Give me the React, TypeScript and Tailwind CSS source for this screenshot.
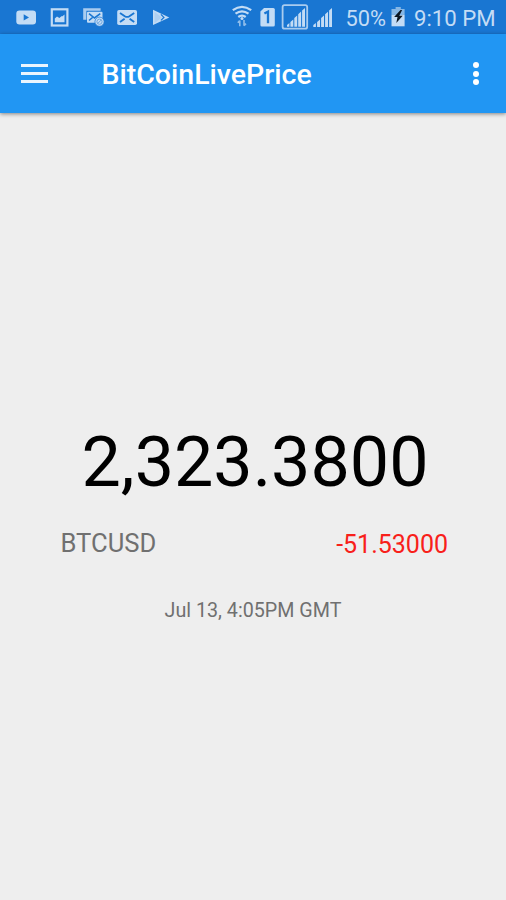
import type { ReactNode } from "react";

const ICON = "#c3dcf5";
const BAR = "#1976d2";

type GlyphProps = { x: number; w: number; className?: string; children: ReactNode };

function Glyph({ x, w, className, children }: GlyphProps) {
  return (
    <svg width={w} height={34} viewBox={`${x} 0 ${w} 34`} className={`shrink-0 ${className ?? ""}`} fill="none">
      {children}
    </svg>
  );
}

function StatusBar() {
  return (
    <div className="flex h-[34px] items-start bg-[#1976d2] pl-4 text-[22.2px] leading-[37px] text-[#c3dcf5]">
      <Glyph x={16} w={21}>
        <rect x="16.3" y="10.5" width="19.7" height="14" rx="3.2" fill={ICON} />
        <path d="M23.7 14.2v6.4l5.3-3.2z" fill={BAR} />
      </Glyph>
      <Glyph x={50} w={20} className="ml-[13px]">
        <rect x="51.8" y="9.3" width="15.6" height="16.2" stroke={ICON} strokeWidth="2.2" />
        <path d="M54.8 22.2v-3.6l2.2-2 2.4 1.4 2-1.7h1.1l2-1.7v7.6z" fill={ICON} />
      </Glyph>
      <Glyph x={82} w={24} className="ml-3">
        <path d="M83.2 8.2h17.4v2.6H86.4v9h-3.2z" fill={ICON} opacity="0.85" />
        <rect x="87" y="11.8" width="15.5" height="11" rx="1" fill={ICON} />
        <path d="M89 13.6l5.5 4.4 5.8-4.4M89 20.5l3.5-3" stroke={BAR} strokeWidth="1.6" />
        <circle cx="99.5" cy="21.7" r="4.6" fill={ICON} stroke={BAR} strokeWidth="0.7" />
        <circle cx="99.5" cy="21.7" r="2.6" stroke="#6da6e0" strokeWidth="1" />
        <path d="M97.7 23.5l3.6-3.6" stroke="#6da6e0" strokeWidth="1" />
      </Glyph>
      <Glyph x={116} w={22} className="ml-[10px]">
        <rect x="117.2" y="10" width="19.8" height="15" rx="1.8" fill={ICON} />
        <path d="M120 13l4.8 3.2q2.3 1.4 4.6 0l4.8-3.2M120 22l4.6-3.3M134.2 22l-4.6-3.3" stroke={BAR} strokeWidth="1.9" />
      </Glyph>
      <Glyph x={151} w={20} className="ml-[13px]">
        <path d="M153 9.7v15.4l16.3-7.7z" fill={ICON} />
        <path d="M154.5 11.7l7.3 5.7-7.3 5.8z" fill="#aed0f2" />
        <path d="M160.9 14.4l3 3-3 3" stroke={BAR} strokeWidth="1.3" />
      </Glyph>

      <Glyph x={231} w={22} className="ml-[60px]">
        <g stroke={ICON} strokeWidth="2.2">
          <path d="M232.8 10.2q9.2-6.8 18.4 0" />
          <path d="M235.5 13.7q6.5-4.8 13 0" />
          <path d="M238.3 17q3.7-2.8 7.4 0" />
        </g>
        <circle cx="242" cy="18.4" r="1.5" fill={ICON} />
        <path d="M239.8 26.3v-5.7m-2 2.2l2-2.2M244 20v5.8m2-2.2l-2 2.2" stroke={ICON} strokeWidth="1.6" opacity="0.7" />
      </Glyph>
      <Glyph x={259} w={17} className="ml-[6px]">
        <path d="M264 8h9.3q1.5 0 1.5 1.5v15.6q0 1.5-1.5 1.5h-11.4q-1.5 0-1.5-1.5V11.4z" fill={ICON} />
        <path d="M264.4 13.6l3.6-2v11.6" stroke={BAR} strokeWidth="2.3" />
      </Glyph>
      <Glyph x={281} w={28} className="ml-[5px]">
        <rect x="282.6" y="5.1" width="24.6" height="23.6" rx="2" stroke={ICON} strokeWidth="1.8" opacity="0.85" />
        <path d="M287 26.7v-1.8l2.4-2v3.8zM290.4 26.7v-4.6l2.9-2.5v7.1zM294.3 26.7v-8.6l2.9-2.6v11.2zM298.2 26.7V14.2l2.9-2.6v15.1zM302.1 26.7V10.4l2.9-2.5v18.8z" fill={ICON} />
      </Glyph>
      <Glyph x={312} w={22} className="ml-[3px]">
        <path d="M313.3 26.9v-1.8l2.6-2v3.8zM317.1 26.9v-4.8l2.9-2.5v7.3zM321.1 26.9v-8.8l2.9-2.6v11.4zM325.1 26.9V14.3l2.9-2.6v15.2zM329.1 26.9V10.6l2.9-2.5v18.8z" fill={ICON} />
      </Glyph>
      <span className="ml-[11.5px] w-[44.5px] text-[21.8px] whitespace-nowrap">50%</span>
      <Glyph x={390} w={16}>
        <path d="M395.6 9V7h5.2v2h3.8v6H391.5V9z" fill="#86b7e5" />
        <path d="M391.5 15h13.1v11.3h-13.1z" fill={ICON} />
        <path d="M400.5 10l-6.4 7h3.4l-1.2 6 6.4-7.3h-3.4l2.8-5.7z" fill="#0b1622" />
      </Glyph>
      <span className="ml-[8px] whitespace-nowrap">9:10 PM</span>
    </div>
  );
}

function AppBar() {
  return (
    <header className="relative flex h-[79px] items-center bg-[#2196f3] text-white shadow-[0_1px_4px_rgba(0,0,0,0.45)]">
      <button aria-label="Menu" className="ml-[21px] flex w-[27px] flex-col gap-[5px]">
        <span className="h-[3px] bg-[#eaf5fe]" />
        <span className="h-[3px] bg-[#eaf5fe]" />
        <span className="h-[3px] bg-[#eaf5fe]" />
      </button>
      <h1 className="ml-[53.5px] pt-[2px] text-[28.5px] leading-8 font-medium">BitCoinLivePrice</h1>
      <button aria-label="More options" className="mr-[27px] ml-auto flex flex-col gap-[2.4px]">
        <span className="size-[6px] rounded-full bg-white" />
        <span className="size-[6px] rounded-full bg-white" />
        <span className="size-[6px] rounded-full bg-white" />
      </button>
    </header>
  );
}

export default function App() {
  return (
    <div className="flex h-[900px] w-[506px] flex-col overflow-hidden bg-[#eeeeee] font-[Roboto,sans-serif]">
      <StatusBar />
      <AppBar />
      <main className="flex flex-col pt-[308px]">
        <p className="pl-[4px] text-center text-[70px] leading-[82px] text-black">2,323.3800</p>
        <div className="mt-[25px] flex items-start justify-between pr-[58px] pl-[60.5px] leading-[30px]">
          <span className="text-[25.6px] text-[#707070]">BTCUSD</span>
          <span className="pt-[2px] text-[25px] text-[#f8201a]">-51.53000</span>
        </div>
        <p className="mt-[39px] text-center text-[19.7px] leading-6 text-[#707070]">Jul 13, 4:05PM GMT</p>
      </main>
    </div>
  );
}
